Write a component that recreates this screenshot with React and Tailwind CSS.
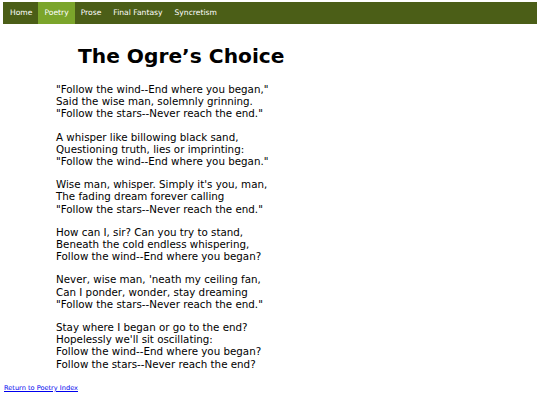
export default function App() {
  const stanzas = [
    [
      '"Follow the wind--End where you began,"',
      "Said the wise man, solemnly grinning.",
      '"Follow the stars--Never reach the end."',
    ],
    [
      "A whisper like billowing black sand,",
      "Questioning truth, lies or imprinting:",
      '"Follow the wind--End where you began."',
    ],
    [
      "Wise man, whisper. Simply it's you, man,",
      "The fading dream forever calling",
      '"Follow the stars--Never reach the end."',
    ],
    [
      "How can I, sir? Can you try to stand,",
      "Beneath the cold endless whispering,",
      "Follow the wind--End where you began?",
    ],
    [
      "Never, wise man, 'neath my ceiling fan,",
      "Can I ponder, wonder, stay dreaming",
      '"Follow the stars--Never reach the end."',
    ],
    [
      "Stay where I began or go to the end?",
      "Hopelessly we'll sit oscillating:",
      "Follow the wind--End where you began?",
      "Follow the stars--Never reach the end?",
    ],
  ];

  const nav = ["Home", "Poetry", "Prose", "Final Fantasy", "Syncretism"];

  return (
    <div className="min-h-screen bg-white px-[3px] pt-[2px] font-['DejaVu_Sans',Verdana,sans-serif] text-black">
      {/* Nav */}
      <div className="flex h-[22px] items-stretch bg-[#4b5e17] pl-[1px]">
        {nav.map((n) => (
          <a
            key={n}
            href="#"
            className={`flex items-center px-[6px] text-[7.6px] text-white ${
              n === "Poetry" ? "bg-[#7ba52b]" : ""
            }`}
          >
            {n}
          </a>
        ))}
      </div>

      {/* Poem */}
      <div className="pl-[53px] pt-[17px]">
        <h1 className="pl-[22px] text-[20.2px] font-bold leading-[30px]">The Ogre’s Choice</h1>
        <div className="mt-[12px]">
          {stanzas.map((s, i) => (
            <p key={i} className="mb-[11px] text-[10.3px] leading-[12.2px] last:mb-[3px]">
              {s.map((l, j) => (
                <span key={j} className="block">{l}</span>
              ))}
            </p>
          ))}
        </div>
      </div>

      <div className="pl-[1px]">
        <a href="#" className="text-[6.6px] leading-[10px] text-[#0000ee] underline">Return to Poetry Index</a>
      </div>
    </div>
  );
}
